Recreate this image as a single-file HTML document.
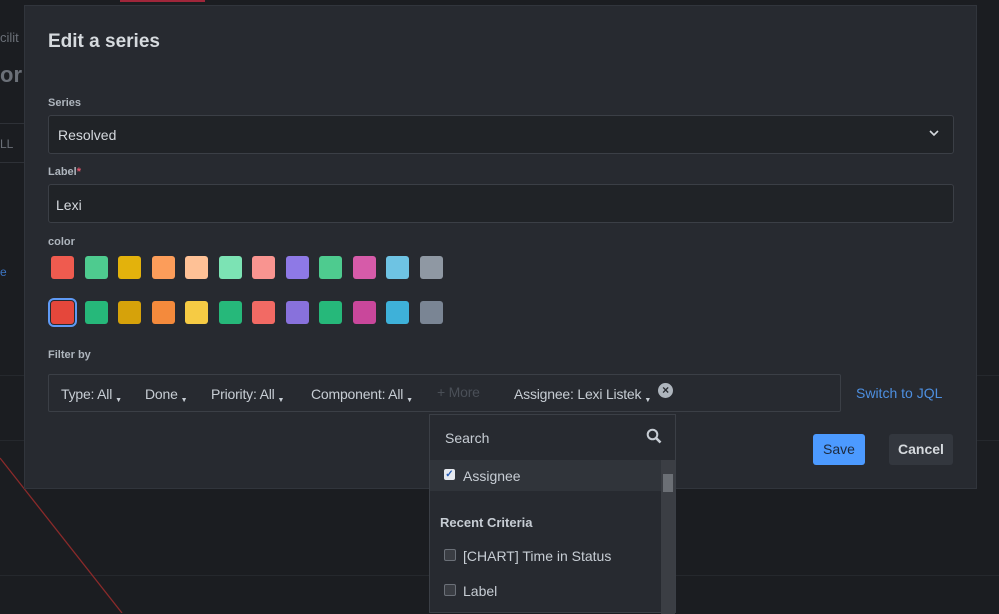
<!DOCTYPE html><html><head><style>
body{margin:0;width:999px;height:613px;background:#1b1d21;font-family:"Liberation Sans",sans-serif;position:relative;overflow:hidden;color:#c7cdd4}
.a{position:absolute}
.modal{left:24px;top:5px;width:953px;height:484px;background:#272a30;border:1px solid #31353c;box-sizing:border-box}
.lbl{font-size:11px;font-weight:bold;color:#aeb5bd}
.inp{background:#202327;border:1px solid #3b3f46;border-radius:3px;box-sizing:border-box;font-size:14px;color:#d5d9de}
.sw{width:23px;height:23px;border-radius:3px}
.cb{width:10px;height:10px;border:1px solid #6b7078;border-radius:2px;background:#3a3d43}
.c{font-size:7px;vertical-align:-3px;margin-left:3px}
</style></head><body>
<div class="a" style="left:120px;top:0;width:85px;height:2px;background:#a0263a"></div>
<div class="a" style="left:0;top:30px;font-size:13px;color:#6b7078">cilit</div>
<div class="a" style="left:0;top:62px;font-size:22px;font-weight:bold;color:#6b7078">or</div>
<div class="a" style="left:0;top:123px;width:24px;height:38px;border-top:1px solid #2e3137;border-bottom:1px solid #2e3137"></div>
<div class="a" style="left:0;top:137px;font-size:12px;color:#6b7078">LL</div>
<div class="a" style="left:0;top:265px;font-size:12px;color:#3d76c4">e</div>
<div class="a" style="left:0;top:375px;width:999px;height:1px;background:#25282d"></div>
<div class="a" style="left:0;top:440px;width:999px;height:1px;background:#25282d"></div>
<div class="a" style="left:0;top:575px;width:999px;height:1px;background:#25282d"></div>
<svg class="a" style="left:0;top:0" width="999" height="613"><line x1="0" y1="458" x2="122" y2="613" stroke="#8a2a2a" stroke-width="1.3"/></svg>
<div class="a modal">
<div class="a" style="left:23px;top:25px;font-size:19px;font-weight:bold;color:#d6dade">Edit a series</div>
<div class="a lbl" style="left:23px;top:91px">Series</div>
<div class="a inp" style="left:23px;top:109px;width:906px;height:39px;padding:11px 9px">Resolved</div>
<svg class="a" style="left:904px;top:123px" width="10" height="8"><path d="M1 2l4 4 4-4" stroke="#d5d9de" stroke-width="1.6" fill="none"/></svg>
<div class="a lbl" style="left:23px;top:160px">Label<span style="color:#e0556b">*</span></div>
<div class="a inp" style="left:23px;top:178px;width:906px;height:39px;padding:12px 7px">Lexi</div>
<div class="a lbl" style="left:23px;top:230px">color</div>
<div class="a" style="left:26px;top:250px;display:flex;gap:10.5px">
<div class="sw" style="background:#ef5b4f"></div><div class="sw" style="background:#4ecb8f"></div><div class="sw" style="background:#e3b20c"></div><div class="sw" style="background:#fc9d5a"></div><div class="sw" style="background:#fec196"></div><div class="sw" style="background:#7ce3b4"></div><div class="sw" style="background:#f99490"></div><div class="sw" style="background:#8e79e6"></div><div class="sw" style="background:#4ecb8f"></div><div class="sw" style="background:#d65ba9"></div><div class="sw" style="background:#6ec3e3"></div><div class="sw" style="background:#8f98a3"></div></div>
<div class="a" style="left:26px;top:295px;display:flex;gap:10.5px">
<div class="sw" style="background:#e5473b;outline:2px solid #5f9af5;outline-offset:1px"></div><div class="sw" style="background:#26b87a"></div><div class="sw" style="background:#d6a20a"></div><div class="sw" style="background:#f48a3c"></div><div class="sw" style="background:#f6cb44"></div><div class="sw" style="background:#26b87a"></div><div class="sw" style="background:#f26a64"></div><div class="sw" style="background:#8871dc"></div><div class="sw" style="background:#26b87a"></div><div class="sw" style="background:#c9479b"></div><div class="sw" style="background:#3eb1d9"></div><div class="sw" style="background:#7a8594"></div></div>
<div class="a lbl" style="left:23px;top:343px">Filter by</div>
<div class="a" style="left:23px;top:368px;width:793px;height:38px;border:1px solid #3b3f46;border-radius:2px;box-sizing:border-box;font-size:14px;color:#c7cdd4;letter-spacing:-0.2px">
<span class="a" style="left:12px;top:11px">Type: All<span class="c">▼</span></span>
<span class="a" style="left:96px;top:11px">Done<span class="c">▼</span></span>
<span class="a" style="left:162px;top:11px">Priority: All<span class="c">▼</span></span>
<span class="a" style="left:262px;top:11px">Component: All<span class="c">▼</span></span>
<span class="a" style="left:388px;top:9px;color:#4a4f57">+ More</span>
<span class="a" style="left:465px;top:11px">Assignee: Lexi Listek<span class="c">▼</span></span>
<span class="a" style="left:609px;top:8px;width:15px;height:15px;border-radius:50%;background:#aeb5bd;color:#272a30;font-size:12px;line-height:15px;text-align:center;font-weight:bold">×</span>
</div>
<div class="a" style="left:831px;top:379px;font-size:14px;color:#4d8fe0">Switch to JQL</div>
<div class="a" style="left:788px;top:428px;width:52px;height:31px;background:#4c9aff;border-radius:3px;color:#1d2a3d;font-size:14px;line-height:31px;text-align:center">Save</div>
<div class="a" style="left:864px;top:428px;width:64px;height:31px;background:#33373e;border-radius:3px;color:#d6dade;font-size:14px;font-weight:bold;line-height:31px;text-align:center">Cancel</div>
</div>
<div class="a" style="left:429px;top:414px;width:247px;height:199px;background:#272a30;border:1px solid #3b3f46;box-sizing:border-box">
<div class="a" style="left:15px;top:15px;font-size:14px;color:#c7cdd4">Search</div>
<svg class="a" style="left:216px;top:13px" width="16" height="16"><circle cx="6.5" cy="6.5" r="4.8" stroke="#c7cdd4" stroke-width="2" fill="none"/><path d="M10 10l4.5 4.5" stroke="#c7cdd4" stroke-width="2.6"/></svg>
<div class="a" style="left:0;top:45px;width:231px;height:31px;background:#30343a"></div>
<div class="a" style="left:14px;top:54px;width:11px;height:11px;background:#e6eaf0;border-radius:2px;color:#2a5fb8;font-size:10px;line-height:11px;text-align:center;font-weight:bold">✓</div>
<div class="a" style="left:33px;top:53px;font-size:14px;color:#c7cdd4">Assignee</div>
<div class="a" style="left:231px;top:45px;width:14px;height:154px;background:#3b3e44"></div>
<div class="a" style="left:233px;top:59px;width:10px;height:18px;background:#6b6f75"></div>
<div class="a" style="left:10px;top:100px;font-size:13px;font-weight:bold;color:#c7cdd4">Recent Criteria</div>
<div class="a cb" style="left:14px;top:134px"></div>
<div class="a" style="left:33px;top:133px;font-size:14px;color:#c7cdd4">[CHART] Time in Status</div>
<div class="a cb" style="left:14px;top:169px"></div>
<div class="a" style="left:33px;top:168px;font-size:14px;color:#c7cdd4">Label</div>
</div>
</body></html>
